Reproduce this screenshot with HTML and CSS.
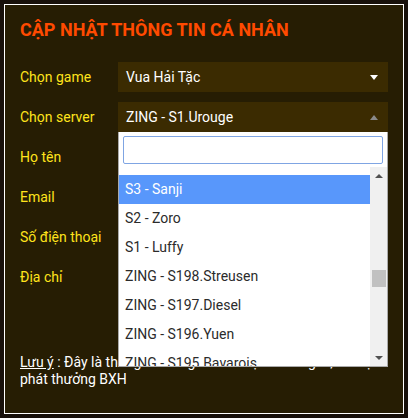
FILE: index.html
```html
<!DOCTYPE html>
<html lang="vi">
<head>
<meta charset="utf-8">
<title>Cập nhật thông tin cá nhân</title>
<link rel="stylesheet" href="styles.css">
</head>
<body>
<div class="panel">
  <h1 class="title">CẬP NHẬT THÔNG TIN CÁ NHÂN</h1>
  <form class="form">
    <label class="label">Chọn game</label>
    <div class="select"><span>Vua Hải Tặc</span><i class="arrow-down"></i></div>

    <label class="label">Chọn server</label>
    <div class="field-wrap">
      <div class="select"><span>ZING - S1.Urouge</span><i class="arrow-up"></i></div>
      <div class="dropdown">
        <div class="search"><input class="search-input" type="text"></div>
        <div class="results">
          <ul class="options">
            <li class="option">S4 - Robin</li>
            <li class="option active">S3 - Sanji</li>
            <li class="option">S2 - Zoro</li>
            <li class="option">S1 - Luffy</li>
            <li class="option">ZING - S198.Streusen</li>
            <li class="option">ZING - S197.Diesel</li>
            <li class="option">ZING - S196.Yuen</li>
            <li class="option">ZING - S195.Bavarois</li>
            <li class="option">ZING - S194.Kinemon</li>
          </ul>
          <div class="scrollbar">
            <div class="sb-btn"><i class="sb-up"></i></div>
            <div class="sb-track"><div class="sb-thumb"></div></div>
            <div class="sb-btn"><i class="sb-down"></i></div>
          </div>
        </div>
      </div>
    </div>

    <label class="label">Họ tên</label>
    <input class="input" type="text">

    <label class="label">Email</label>
    <input class="input" type="text">

    <label class="label">Số điện thoại</label>
    <input class="input" type="text">

    <label class="label">Địa chỉ</label>
    <textarea class="input textarea"></textarea>
  </form>
  <p class="note"><u>Lưu ý</u> : Đây là thông tin dùng để liên hệ và trao giải, hỗ trợ phát thưởng BXH</p>
</div>
</body>
</html>
```

FILE: styles.css
```css
* { box-sizing: border-box; }
html, body { margin: 0; padding: 0; }
body {
  background: #17100a;
  padding: 4px;
  font-family: Roboto, "Noto Sans", Arial, sans-serif;
  font-size: 14px;
}
.panel {
  width: 400px;
  height: 410px;
  border: 1px solid #ffffff;
  background: #261d03;
  padding: 14px 15px 0 15px;
  overflow: hidden;
}
.title {
  margin: 0 0 22px 0;
  font-size: 18px;
  line-height: 21px;
  font-weight: 700;
  color: #ff4a00;
}
.form {
  display: grid;
  grid-template-columns: 98px 270px;
  row-gap: 10px;
  align-items: start;
}
.label {
  color: #ffe41c;
  line-height: 30px;
  height: 30px;
}
.select, .input {
  height: 30px;
  background: #3b2b01;
  border: 0;
  display: flex;
  align-items: center;
  padding: 0 8px;
  color: #ffffff;
  font: inherit;
  position: relative;
}
.textarea { height: 60px; resize: none; }
.select span { flex: 1; }
.arrow-down {
  width: 0; height: 0;
  border-left: 4px solid transparent;
  border-right: 4px solid transparent;
  border-top: 5px solid #ffffff;
  margin-right: 2px;
}
.arrow-up {
  width: 0; height: 0;
  border-left: 4px solid transparent;
  border-right: 4px solid transparent;
  border-bottom: 5px solid #8a8a8a;
  margin-right: 2px;
}
.field-wrap { position: relative; height: 30px; }
.dropdown {
  position: absolute;
  top: 30px;
  left: 0;
  width: 270px;
  background: #ffffff;
  border: 1px solid #aaaaaa;
  border-top: 0;
  z-index: 10;
}
.search { padding: 4px 4px 3px 4px; }
.search-input {
  display: block;
  width: 100%;
  height: 28px;
  border: 1px solid #7fa5e3;
  border-radius: 2px;
  outline: none;
  background: #fff;
}
.results {
  display: flex;
  height: 199px;
}
.options {
  flex: 1;
  list-style: none;
  margin: 0;
  padding: 0;
  overflow: hidden;
}
.option {
  height: 29px;
  line-height: 29px;
  padding-left: 6px;
  color: #2b2b2b;
}
.option:first-child { margin-top: -21px; }
.option.active { background: #5897fb; color: #ffffff; }
.scrollbar {
  width: 17px;
  background: #f0f0f0;
  display: flex;
  flex-direction: column;
}
.sb-btn {
  height: 17px;
  display: flex;
  align-items: center;
  justify-content: center;
}
.sb-up {
  width: 0; height: 0;
  border-left: 4px solid transparent;
  border-right: 4px solid transparent;
  border-bottom: 4px solid #505050;
}
.sb-down {
  width: 0; height: 0;
  border-left: 4px solid transparent;
  border-right: 4px solid transparent;
  border-top: 4px solid #505050;
}
.sb-track { flex: 1; padding: 86px 1px 0 2px; }
.sb-thumb { height: 17px; background: #c1c1c1; }
.note {
  margin: 32px 0 0 0;
  color: #ffffff;
  line-height: 17px;
}
```
